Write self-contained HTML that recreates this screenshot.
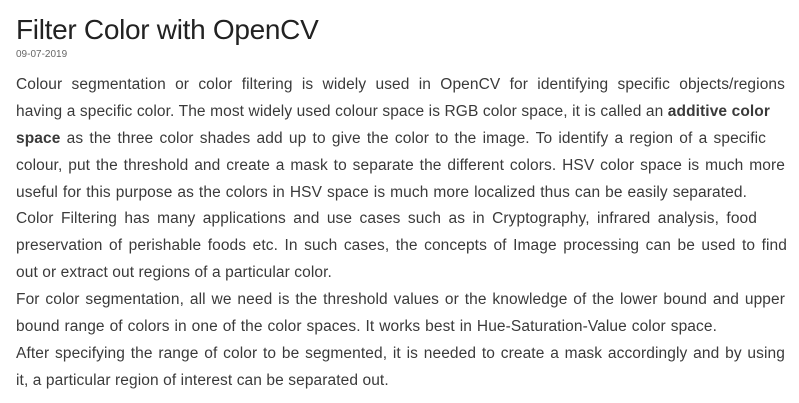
<!DOCTYPE html>
<html><head><meta charset="utf-8"><style>
html,body{margin:0;padding:0;background:#fff;width:799px;height:403px;overflow:hidden}
body{font-family:"Liberation Sans",Arial,sans-serif;color:#333}
h1{position:absolute;left:16px;top:12px;margin:0;font-weight:normal;font-size:28px;line-height:36px;color:#222;letter-spacing:-0.3px;white-space:nowrap}
.d{position:absolute;left:16px;top:49px;font-size:10px;color:#666}
.p{position:absolute;left:16px;top:72px;font-size:15.5px;line-height:26.9px;white-space:nowrap;letter-spacing:0.1px;color:#3a3a3a}
.p span{display:block;text-align:justify;text-align-last:justify;white-space:normal;height:26.9px;overflow:visible}
.p span.n{text-align-last:left}
</style></head><body>
<h1>Filter Color with OpenCV</h1>
<div class="d">09-07-2019</div>
<div class="p">
<span style="width:769px">Colour segmentation or color filtering is widely used in OpenCV for identifying specific objects/regions</span>
<span style="width:754px">having a specific color. The most widely used colour space is RGB color space, it is called an <b>additive color</b></span>
<span style="width:750px"><b>space</b> as the three color shades add up to give the color to the image. To identify a region of a specific</span>
<span style="width:769px">colour, put the threshold and create a mask to separate the different colors. HSV color space is much more</span>
<span style="width:731px">useful for this purpose as the colors in HSV space is much more localized thus can be easily separated.</span>
<span style="width:741px">Color Filtering has many applications and use cases such as in Cryptography, infrared analysis, food</span>
<span style="width:771px">preservation of perishable foods etc. In such cases, the concepts of Image processing can be used to find</span>
<span class="n" style="width:330px">out or extract out regions of a particular color.</span>
<span style="width:769px">For color segmentation, all we need is the threshold values or the knowledge of the lower bound and upper</span>
<span style="width:701px">bound range of colors in one of the color spaces. It works best in Hue-Saturation-Value color space.</span>
<span style="width:769px">After specifying the range of color to be segmented, it is needed to create a mask accordingly and by using</span>
<span class="n" style="width:390px">it, a particular region of interest can be separated out.</span>
</div>
</body></html>
